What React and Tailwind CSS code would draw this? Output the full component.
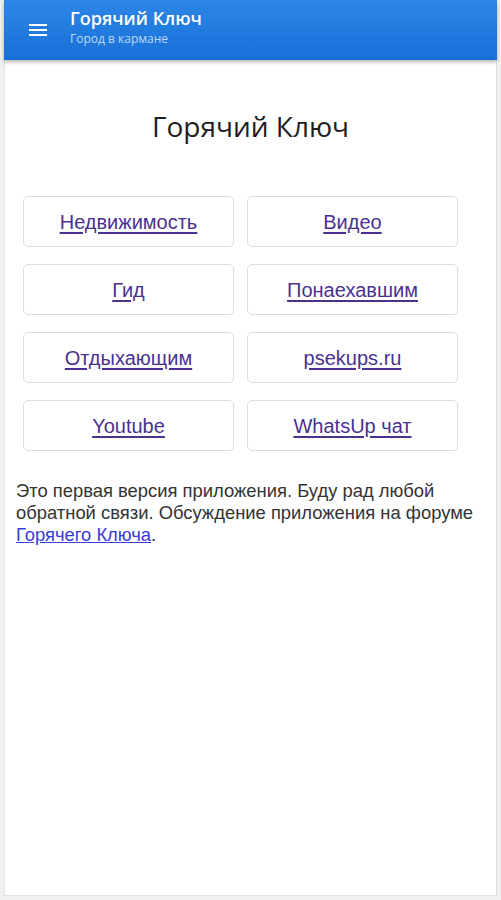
import React from 'react';

const links = [
  'Недвижимость',
  'Видео',
  'Гид',
  'Понаехавшим',
  'Отдыхающим',
  'psekups.ru',
  'Youtube',
  'WhatsUp чат',
];

export default function App() {
  return (
    <div className="w-[501px] h-[900px] bg-[#f1f1f1] px-[4px] pb-[4px] overflow-hidden">
      <div className="h-full bg-white border-x border-b border-[#e2e2e2] flex flex-col">
        {/* Header */}
        <div className="h-[60px] -mx-px bg-gradient-to-b from-[#2d86e6] to-[#1670d8] flex items-center shadow-[0_2px_4px_rgba(0,0,0,0.3)] relative z-10">
          <div className="w-[66px] flex justify-center pl-[2px]">
            <svg width="18" height="14" viewBox="0 0 18 14">
              <rect x="0" y="1" width="18" height="2" fill="#fff" />
              <rect x="0" y="6" width="18" height="2" fill="#fff" />
              <rect x="0" y="11" width="18" height="2" fill="#fff" />
            </svg>
          </div>
          <div className="flex flex-col gap-[4px] -mt-[6px]" style={{ fontFamily: '"Open Sans", Roboto, sans-serif' }}>
            <span className="text-white font-semibold text-[18px] leading-[20px]">Горячий Ключ</span>
            <span className="text-[#bcd8f8] text-[12px] leading-[14px]">Город в кармане</span>
          </div>
        </div>

        {/* Content */}
        <div className="flex-1">
          <h1
            className="text-center text-[28px] leading-[36px] text-[#1e1e1e] mt-[48px]"
            style={{ fontFamily: '"Open Sans", "Noto Sans", sans-serif' }}
          >
            Горячий Ключ
          </h1>

          <div className="grid grid-cols-2 gap-x-[13px] gap-y-[17px] pl-[18px] pr-[38px] mt-[52px]">
            {links.map((l) => (
              <a
                key={l}
                href="#"
                className="h-[51px] flex items-center justify-center border border-[#dcdcdc] rounded-[5px] text-[#4a3190] underline underline-offset-[3px] text-[20px]"
                style={{ fontFamily: '"Liberation Sans", Arial, sans-serif' }}
              >
                {l}
              </a>
            ))}
          </div>

          <p
            className="pl-[11px] pr-[12px] mt-[29px] text-[18.4px] leading-[22px] text-[#333]"
            style={{ fontFamily: '"Liberation Sans", Arial, sans-serif' }}
          >
            Это первая версия приложения. Буду рад любой обратной связи. Обсуждение приложения на форуме{' '}
            <a href="#" className="text-[#3a3ad8] underline">Горячего Ключа</a>.
          </p>
        </div>
      </div>
    </div>
  );
}
